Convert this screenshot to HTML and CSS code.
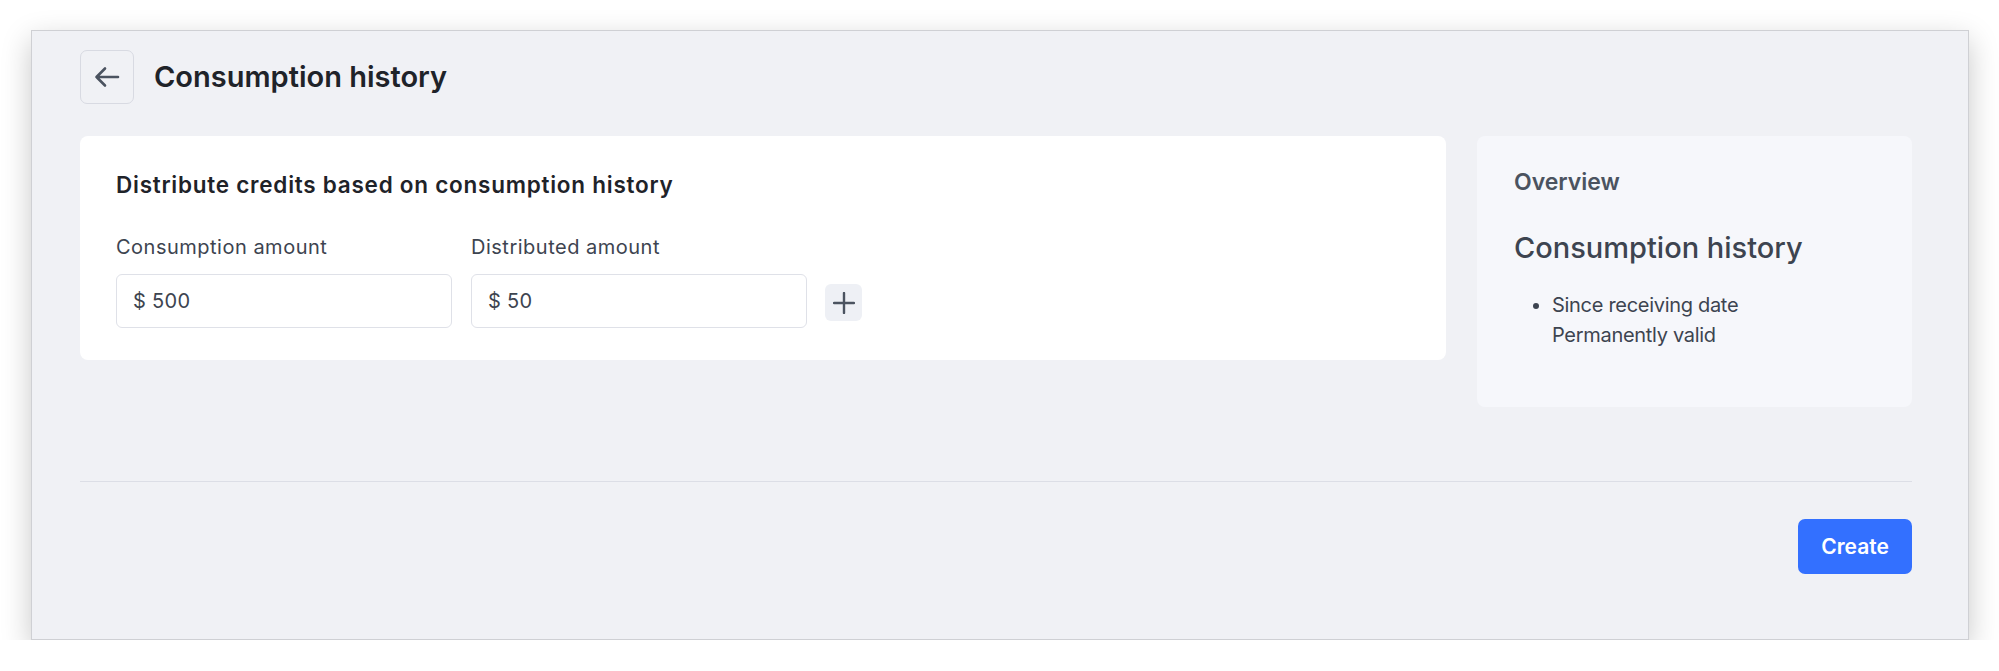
FILE: index.html
```html
<!DOCTYPE html>
<html>
  <head>
    <meta charset="utf-8" />

    <title>Consumption history</title>

    <link rel="stylesheet" href="styles.css">
  </head>

  <body>
    <div class="window">
      <div class="page-header">
        <button class="back-button" aria-label="Back">
          <svg width="26" height="22" viewBox="0 0 26 22">
            <path d="M24 11H2.5M11 2.5L2.5 11L11 19.5" fill="none" stroke="#4b5360" stroke-width="2.6" stroke-linecap="round" stroke-linejoin="round" />
          </svg>
        </button>
        <h1 class="page-title">Consumption history</h1>
      </div>

      <div class="page-body">
        <div class="card">
          <h2 class="card-title">Distribute credits based on consumption history</h2>
          <div class="rule-row">
            <div class="field">
              <label class="field-label">Consumption amount</label>
              <div class="input">$ 500</div>
            </div>
            <div class="field">
              <label class="field-label">Distributed amount</label>
              <div class="input">$ 50</div>
            </div>
            <button class="add-button" aria-label="Add">
              <svg width="22" height="22" viewBox="0 0 22 22">
                <path d="M11 1V21M1 11H21" fill="none" stroke="#4b5360" stroke-width="2.4" stroke-linecap="round" />
              </svg>
            </button>
          </div>
        </div>

        <div class="overview">
          <div class="overview-label">Overview</div>
          <div class="overview-title">Consumption history</div>
          <ul class="overview-list">
            <li>Since receiving date<br />Permanently valid</li>
          </ul>
        </div>
      </div>

      <div class="page-footer">
        <button class="primary-button">Create</button>
      </div>
    </div>
  </body>
</html>
```

FILE: styles.css
```css
body {
  margin: 0;
  background-color: white;
  font-family: Inter, 'Noto Sans', 'Liberation Sans', sans-serif;
  color: #1f2329;
}
button {
  font-family: inherit;
  cursor: pointer;
}
.window {
  box-sizing: border-box;
  width: 1938px;
  height: 610px;
  margin: 30px 0 0 31px;
  padding: 19px 56px 0 48px;
  background-color: #f0f1f5;
  border: 1px solid #cfd0d4;
  box-shadow: 0 10px 28px rgba(0, 0, 0, 0.22);
}
.page-header {
  display: flex;
  align-items: center;
  gap: 20px;
}
.back-button {
  display: flex;
  align-items: center;
  justify-content: center;
  width: 54px;
  height: 54px;
  padding: 0;
  background: transparent;
  border: 1px solid #d8dae2;
  border-radius: 7px;
}
.page-title {
  margin: 0;
  font-size: 29px;
  font-weight: 600;
  line-height: 40px;
  color: #1f2329;
}
.page-body {
  display: grid;
  grid-template-columns: 1fr 435px;
  gap: 31px;
  align-items: start;
  margin-top: 32px;
  padding-bottom: 74px;
  border-bottom: 1px solid #dcdee6;
}
.card {
  padding: 34px 36px 32px;
  background-color: white;
  border-radius: 8px;
}
.card-title {
  margin: 0;
  font-size: 22.5px;
  font-weight: 600;
  letter-spacing: 0.75px;
  line-height: 30px;
  color: #1f2329;
}
.rule-row {
  display: flex;
  align-items: flex-end;
  gap: 19px;
  margin-top: 33px;
}
.field {
  display: flex;
  flex-direction: column;
  gap: 13px;
}
.field-label {
  font-size: 20px;
  letter-spacing: 0.5px;
  line-height: 28px;
  color: #3d4450;
}
.input {
  box-sizing: border-box;
  display: flex;
  align-items: center;
  width: 336px;
  height: 54px;
  padding: 0 16px;
  background-color: white;
  border: 1px solid #dfe1e8;
  border-radius: 6px;
  font-size: 20px;
  letter-spacing: 0.3px;
  color: #3d4450;
}
.add-button {
  display: flex;
  align-items: center;
  justify-content: center;
  width: 37px;
  height: 37px;
  margin: 0 0 7px -1px;
  padding: 0;
  background-color: #eef0f5;
  border: none;
  border-radius: 6px;
}
.overview {
  box-sizing: border-box;
  min-height: 271px;
  padding: 31px 37px 26px;
  background-color: #f6f7fb;
  border-radius: 8px;
  color: #3d4450;
}
.overview-label {
  font-size: 23px;
  font-weight: 600;
  line-height: 30px;
  color: #4b5360;
}
.overview-title {
  margin-top: 31px;
  font-size: 29px;
  font-weight: 500;
  line-height: 40px;
}
.overview-list {
  margin: 22px 0 0;
  padding-left: 38px;
  font-size: 20px;
  letter-spacing: -0.3px;
  line-height: 30px;
}
.page-footer {
  display: flex;
  justify-content: flex-end;
  padding-top: 37px;
}
.primary-button {
  width: 114px;
  height: 55px;
  padding: 0;
  background-color: #3370ff;
  border: none;
  border-radius: 7px;
  font-size: 21px;
  font-weight: 600;
  color: white;
}
```
